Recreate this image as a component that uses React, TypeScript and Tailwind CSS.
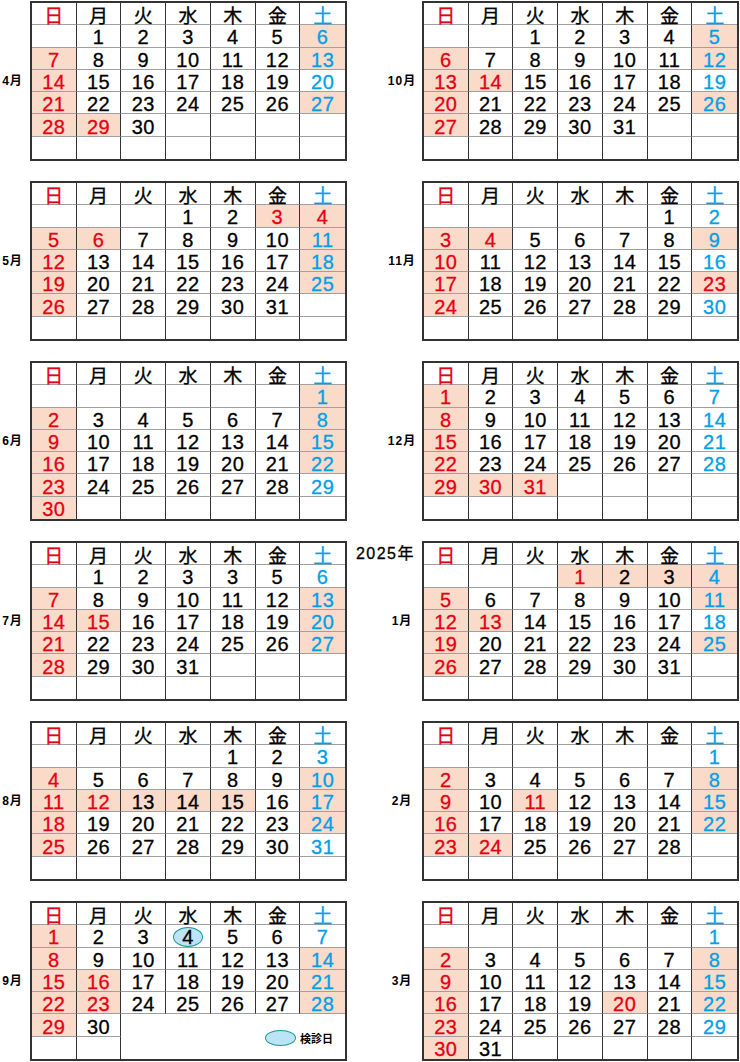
// 診療カレンダー 2024年4月〜2025年3月
import React from 'react'

const WEEK = ['日', '月', '火', '水', '木', '金', '土']

// 記法: 数字 or "_"(空欄) + フラグ  * = 休診(塗り)  r = 赤字  k = 黒字  o = 検診日
type Month = { label: string; rows: string; year?: string; legend?: boolean }

const LEFT: Month[] = [
  { label: '4月', rows: '_ 1 2 3 4 5 6*|7* 8 9 10 11 12 13*|14* 15 16 17 18 19 20|21* 22 23 24 25 26 27*|28* 29r* 30 _ _ _ _|_ _ _ _ _ _ _' },
  { label: '5月', rows: '_ _ _ 1 2 3r* 4r*|5* 6r* 7 8 9 10 11*|12* 13 14 15 16 17 18*|19* 20 21 22 23 24 25*|26* 27 28 29 30 31 _|_ _ _ _ _ _ _' },
  { label: '6月', rows: '_ _ _ _ _ _ 1*|2* 3 4 5 6 7 8*|9* 10 11 12 13 14 15*|16* 17 18 19 20 21 22*|23* 24 25 26 27 28 29|30* _ _ _ _ _ _' },
  { label: '7月', rows: '_ 1 2 3 3 5 6|7* 8 9 10 11 12 13*|14* 15r* 16 17 18 19 20*|21* 22 23 24 25 26 27*|28* 29 30 31 _ _ _|_ _ _ _ _ _ _' },
  { label: '8月', rows: '_ _ _ _ 1 2 3|4* 5 6 7 8 9 10*|11* 12r* 13* 14* 15* 16 17*|18* 19 20 21 22 23 24*|25* 26 27 28 29 30 31|_ _ _ _ _ _ _' },
  { label: '9月', rows: '1* 2 3 4o 5 6 7|8* 9 10 11 12 13 14*|15* 16r* 17 18 19 20 21*|22* 23r* 24 25 26 27 28*|29* 30|_ _', legend: true },
]

const RIGHT: Month[] = [
  { label: '10月', rows: '_ _ 1 2 3 4 5*|6* 7 8 9 10 11 12*|13* 14r* 15 16 17 18 19|20* 21 22 23 24 25 26*|27* 28 29 30 31 _ _|_ _ _ _ _ _ _' },
  { label: '11月', rows: '_ _ _ _ _ 1 2|3* 4r* 5 6 7 8 9*|10* 11 12 13 14 15 16|17* 18 19 20 21 22 23r*|24* 25 26 27 28 29 30|_ _ _ _ _ _ _' },
  { label: '12月', rows: '1* 2 3 4 5 6 7|8* 9 10 11 12 13 14|15* 16 17 18 19 20 21|22* 23 24 25 26 27 28|29* 30r* 31r* _ _ _ _|_ _ _ _ _ _ _' },
  { label: '1月', year: '2025年', rows: '_ _ _ 1r* 2* 3* 4*|5* 6 7 8 9 10 11*|12* 13r* 14 15 16 17 18|19* 20 21 22 23 24 25*|26* 27 28 29 30 31 _|_ _ _ _ _ _ _' },
  { label: '2月', rows: '_ _ _ _ _ _ 1|2* 3 4 5 6 7 8*|9* 10 11r* 12 13 14 15*|16* 17 18 19 20 21 22*|23* 24r* 25 26 27 28 _|_ _ _ _ _ _ _' },
  { label: '3月', rows: '_ _ _ _ _ _ 1|2* 3 4 5 6 7 8*|9* 10 11 12 13 14 15*|16* 17 18 19 20r* 21 22*|23* 24 25 26 27 28 29|30* 31 _ _ _ _ _' },
]

const LATIN = "font-['Liberation_Sans','Noto_Sans_CJK_JP',sans-serif]"

function DayCell({ token, col, lastCol, lastRow }: { token: string; col: number; lastCol: boolean; lastRow: boolean }) {
  const m = token.match(/^(\d+|_)(.*)$/)
  const text = m && m[1] !== '_' ? m[1] : ''
  const flags = m ? m[2] : ''
  let color = col === 0 ? 'text-[#e60012]' : col === 6 ? 'text-[#00a0e9]' : 'text-black'
  if (flags.includes('r')) color = 'text-[#e60012]'
  if (flags.includes('k')) color = 'text-black'
  const shaded = flags.includes('*')
  const exam = flags.includes('o')
  return (
    <div
      className={`flex items-center justify-center pt-[3px] text-[20px] tracking-[0.5px] leading-none [-webkit-text-stroke:0.3px_currentColor] ${LATIN} ${color} ${shaded ? 'bg-[#fadac8]' : 'bg-white'} ${lastCol ? '' : 'border-r border-r-[#333]'} ${lastRow ? '' : 'border-b border-b-[#a0a0a0]'}`}
    >
      {exam ? (
        <span className="flex items-center justify-center w-[30px] h-[20px] rounded-[50%] border-[1.5px] border-[#159a8c] bg-[#bde3f6]">{text}</span>
      ) : (
        text
      )}
    </div>
  )
}

function Calendar({ month }: { month: Month }) {
  const rows = month.rows.split('|').map((r) => r.split(' '))
  return (
    <div className="grid grid-cols-7 grid-rows-7 w-[317px] h-[160px] border-2 border-[#333] bg-white">
      {WEEK.map((w, i) => (
        <div
          key={w}
          className={`flex items-center justify-center pt-px text-[19px] leading-none [-webkit-text-stroke:0.3px_currentColor] font-['Noto_Sans_CJK_JP',sans-serif] border-b border-b-[#a0a0a0] ${i < 6 ? 'border-r border-r-[#333]' : ''} ${i === 0 ? 'text-[#e60012]' : i === 6 ? 'text-[#00a0e9]' : 'text-black'}`}
        >
          {w}
        </div>
      ))}
      {rows.map((r, ri) =>
        r.map((t, ci) => (
          <DayCell key={`${ri}-${ci}`} token={t} col={ci} lastCol={ci === 6} lastRow={ri === rows.length - 1} />
        ))
      )}
      {month.legend && (
        <div className="col-start-3 col-span-5 row-start-6 row-span-2 flex items-end justify-end pr-[12px] pb-[13px] gap-[4px]">
          <span className="w-[31px] h-[16px] rounded-[50%] border-[1.5px] border-[#159a8c] bg-[#bde3f6]" />
          <span className="text-[11px] font-bold leading-none pb-[2px] font-['Noto_Sans_CJK_JP',sans-serif] text-black">検診日</span>
        </div>
      )}
    </div>
  )
}

function MonthLabel({ text }: { text: string }) {
  return (
    <span className={`text-[12px] font-bold tracking-[1px] whitespace-nowrap text-black ${LATIN}`}>{text}</span>
  )
}

export default function App() {
  return (
    <div className="w-[740px] h-[1062px] bg-white pt-px flex flex-col gap-[20px]">
      {LEFT.map((left, i) => {
        const right = RIGHT[i]
        return (
          <div key={left.label} className="flex">
            <div className="w-[25px] flex items-center justify-center">
              <MonthLabel text={left.label} />
            </div>
            <div className="ml-[5px]">
              <Calendar month={left} />
            </div>
            <div className="w-[75px] grid">
              {right.year && (
                <span className={`col-start-1 row-start-1 self-start justify-self-end mr-[7px] mt-[5px] text-[16px] leading-none tracking-[1.5px] [-webkit-text-stroke:0.3px_currentColor] text-black ${LATIN}`}>
                  {right.year}
                </span>
              )}
              <div className="col-start-1 row-start-1 self-center justify-self-end w-[40px] flex justify-center">
                <MonthLabel text={right.label} />
              </div>
            </div>
            <Calendar month={right} />
          </div>
        )
      })}
    </div>
  )
}
